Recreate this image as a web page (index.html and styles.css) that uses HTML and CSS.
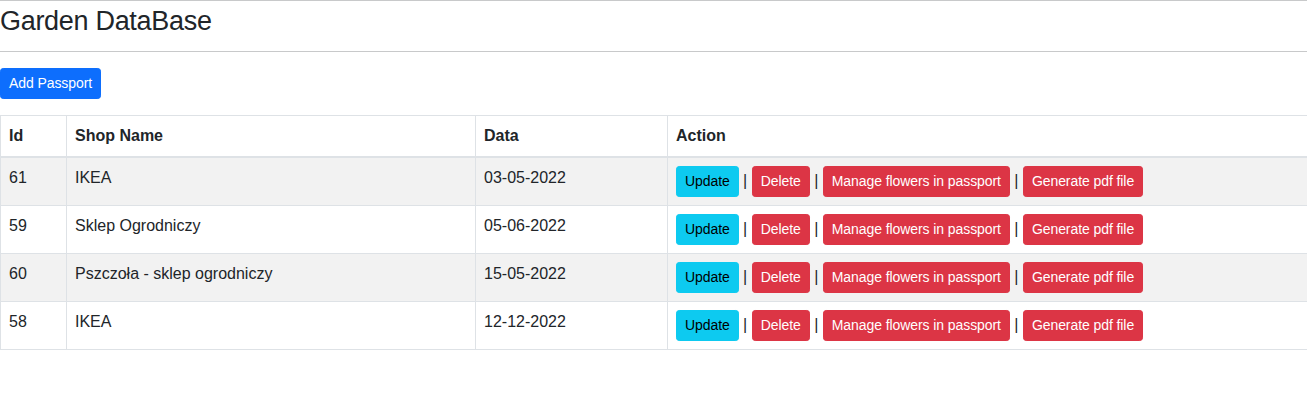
FILE: index.html
```html
<!DOCTYPE html>
<html lang="pl">
<head>
<meta charset="utf-8">
<title>Garden DataBase</title>
<link rel="stylesheet" href="styles.css">
</head>
<body>
<div class="page">
  <hr class="rule rule-top">
  <h3 class="title">Garden DataBase</h3>
  <hr class="rule rule-mid">
  <div class="toolbar">
    <a class="btn btn-primary" href="#">Add Passport</a>
  </div>
  <table class="table">
    <colgroup>
      <col class="c-id">
      <col class="c-name">
      <col class="c-date">
      <col class="c-action">
    </colgroup>
    <thead>
      <tr>
        <th>Id</th>
        <th>Shop Name</th>
        <th>Data</th>
        <th>Action</th>
      </tr>
    </thead>
    <tbody>
      <tr class="odd">
        <td>61</td>
        <td>IKEA</td>
        <td>03-05-2022</td>
        <td><a class="btn btn-info" href="#">Update</a> | <a class="btn btn-danger" href="#">Delete</a> | <a class="btn btn-danger" href="#">Manage flowers in passport</a> | <a class="btn btn-danger" href="#">Generate pdf file</a></td>
      </tr>
      <tr>
        <td>59</td>
        <td>Sklep Ogrodniczy</td>
        <td>05-06-2022</td>
        <td><a class="btn btn-info" href="#">Update</a> | <a class="btn btn-danger" href="#">Delete</a> | <a class="btn btn-danger" href="#">Manage flowers in passport</a> | <a class="btn btn-danger" href="#">Generate pdf file</a></td>
      </tr>
      <tr class="odd">
        <td>60</td>
        <td>Pszczoła - sklep ogrodniczy</td>
        <td>15-05-2022</td>
        <td><a class="btn btn-info" href="#">Update</a> | <a class="btn btn-danger" href="#">Delete</a> | <a class="btn btn-danger" href="#">Manage flowers in passport</a> | <a class="btn btn-danger" href="#">Generate pdf file</a></td>
      </tr>
      <tr>
        <td>58</td>
        <td>IKEA</td>
        <td>12-12-2022</td>
        <td><a class="btn btn-info" href="#">Update</a> | <a class="btn btn-danger" href="#">Delete</a> | <a class="btn btn-danger" href="#">Manage flowers in passport</a> | <a class="btn btn-danger" href="#">Generate pdf file</a></td>
      </tr>
    </tbody>
  </table>
</div>
</body>
</html>
```

FILE: styles.css
```css
html, body {
  margin: 0;
  padding: 0;
  background: #fff;
}

body {
  font-family: "Liberation Sans", Arial, sans-serif;
  font-size: 16px;
  line-height: 1.5;
  color: #212529;
  overflow: hidden;
}

.page {
  display: block;
}

.rule {
  border: 0;
  border-top: 1px solid #c8c9ca;
  height: 0;
  margin: 0;
}

.title {
  margin: 5px 0 15px 0;
  font-size: 27px;
  font-weight: 400;
  line-height: 30px;
  letter-spacing: -0.3px;
  color: #212529;
}

.toolbar {
  margin: 16px 0;
  line-height: 1;
}

.btn {
  display: inline-block;
  font-size: 14px;
  line-height: 21px;
  letter-spacing: -0.08px;
  padding: 4px 8px;
  border: 1px solid transparent;
  border-radius: 3.2px;
  text-decoration: none;
  vertical-align: middle;
  white-space: nowrap;
}

.btn-primary {
  background: #0d6efd;
  border-color: #0d6efd;
  color: #fff;
}

.btn-info {
  background: #0dcaf0;
  border-color: #0dcaf0;
  color: #000;
}

.btn-danger {
  background: #dc3545;
  border-color: #dc3545;
  color: #fff;
}

.table {
  width: calc(100% + 1px);
  border-collapse: collapse;
  table-layout: fixed;
  vertical-align: top;
  border: 1px solid #dee2e6;
}

.c-id { width: 66px; }
.c-name { width: 409px; }
.c-date { width: 192px; }

.table th,
.table td {
  border: 1px solid #dee2e6;
  padding: 8px;
  text-align: left;
  vertical-align: top;
}

.table th {
  font-weight: 700;
}

.table thead th {
  border-bottom: 2px solid #dee2e6;
}

.table tbody tr.odd td {
  background: #f2f2f2;
}

.table td:last-child {
  white-space: nowrap;
}
```
